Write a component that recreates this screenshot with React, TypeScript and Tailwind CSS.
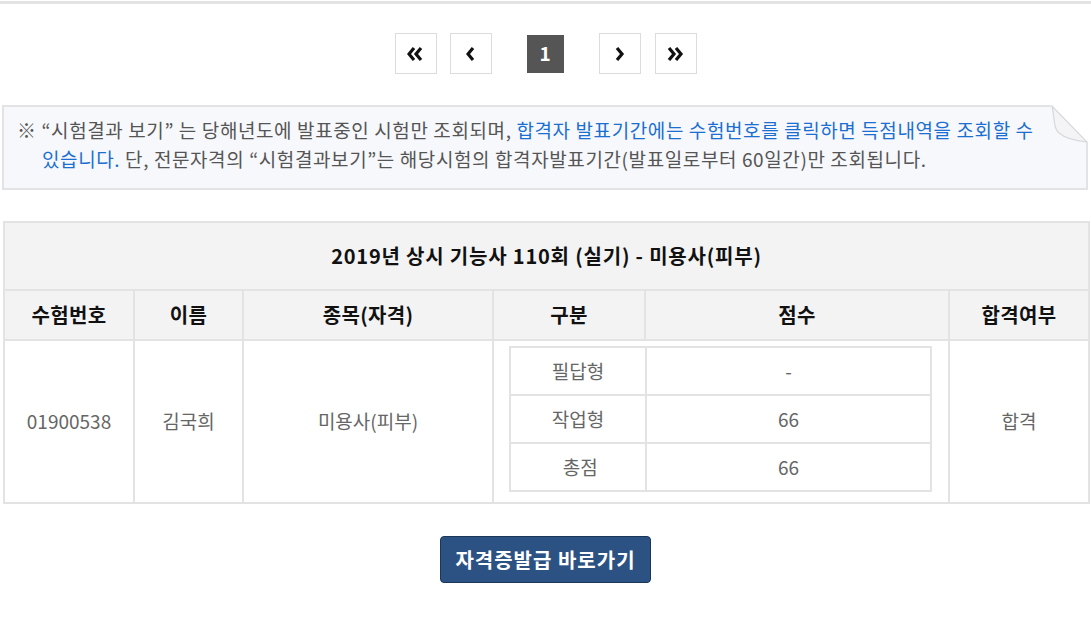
import React from "react";

const font = { fontFamily: '"Noto Sans CJK KR", "Noto Sans", sans-serif' };

function Chev({ dir, double }: { dir: "l" | "r"; double?: boolean }) {
  const pts = (x: number) =>
    dir === "l" ? `${x + 5},2 ${x},8 ${x + 5},14` : `${x},2 ${x + 5},8 ${x},14`;
  return (
    <svg width={double ? 18 : 10} height="16" viewBox={double ? "0 0 18 16" : "0 0 10 16"}>
      {double ? (
        <>
          <polyline points={pts(2)} fill="none" stroke="#111" strokeWidth="3.2" strokeLinejoin="miter" />
          <polyline points={pts(9)} fill="none" stroke="#111" strokeWidth="3.2" strokeLinejoin="miter" />
        </>
      ) : (
        <polyline points={pts(2)} fill="none" stroke="#111" strokeWidth="3.2" strokeLinejoin="miter" />
      )}
    </svg>
  );
}

function PBtn({ children }: { children: React.ReactNode }) {
  return (
    <div className="w-[42px] h-[41px] border border-[#dcdcdc] bg-white flex items-center justify-center">
      {children}
    </div>
  );
}

export default function App() {
  const th = "border-2 border-[#e3e3e3] bg-[#f3f3f3] text-[20px] font-bold text-[#111] text-center tracking-[0.3px]";
  const td = "border-2 border-[#e3e3e3] text-[19px] text-[#666] text-center";
  const itd = "border-2 border-[#e3e3e3] text-[19px] text-[#666] text-center h-[48px]";
  return (
    <div className="w-[1091px] h-[637px] bg-white" style={font}>
      <div className="h-[3px] bg-[#e3e3e3] mt-[1px]" />
      <div className="flex justify-center items-center mt-[29px] h-[41px]">
        <PBtn><Chev dir="l" double /></PBtn>
        <div className="w-[13px]" />
        <PBtn><Chev dir="l" /></PBtn>
        <div className="w-[35px]" />
        <div className="w-[37px] h-[38px] bg-[#555] text-white font-bold text-[19px] flex items-center justify-center">1</div>
        <div className="w-[35px]" />
        <PBtn><Chev dir="r" /></PBtn>
        <div className="w-[14px]" />
        <PBtn><Chev dir="r" double /></PBtn>
      </div>

      <div className="relative ml-[2px] mr-[3px] mt-[31px] h-[85px] border-2 border-[#e3e3e6] bg-[#f7f8fc] pt-[8px] pl-[38px] pr-[40px] text-[19px] leading-[29px] text-[#555] tracking-[0.6px]">
        <div className="-indent-[25px] whitespace-nowrap">
          ※ “시험결과 보기” 는 당해년도에 발표중인 시험만 조회되며,{" "}
          <span className="text-[#1a6fd1]">합격자 발표기간에는 수험번호를 클릭하면 득점내역을 조회할 수</span>
          <br />
          <span className="text-[#1a6fd1]">있습니다.</span> 단, 전문자격의 “시험결과보기”는 해당시험의 합격자발표기간(발표일로부터 60일간)만 조회됩니다.
        </div>
        <svg className="absolute -top-[2px] -right-[2px]" width="38" height="38" viewBox="0 0 38 38">
          <polygon points="0,0 38,0 38,38" fill="#ffffff" />
          <path d="M2 1 C 5 13, 3 23, 9 28 C 15 33, 27 36, 37 37 L 2 1 Z" fill="#f4f4f6" stroke="#d8d8dc" strokeWidth="1.2" />
        </svg>
      </div>

      <table className="ml-[3px] mt-[31px] w-[1085px] border-collapse table-fixed">
        <colgroup>
          <col style={{ width: 130 }} />
          <col style={{ width: 109 }} />
          <col style={{ width: 250 }} />
          <col style={{ width: 152 }} />
          <col style={{ width: 304 }} />
          <col style={{ width: 140 }} />
        </colgroup>
        <tbody>
          <tr className="h-[68px]">
            <td colSpan={6} className={th + " tracking-[0.8px]"}>2019년 상시 기능사 110회 (실기) - 미용사(피부)</td>
          </tr>
          <tr className="h-[50px]">
            <td className={th}>수험번호</td>
            <td className={th}>이름</td>
            <td className={th}>종목(자격)</td>
            <td className={th}>구분</td>
            <td className={th}>점수</td>
            <td className={th}>합격여부</td>
          </tr>
          <tr className="h-[163px]">
            <td className={td + " text-[18px]"}>01900538</td>
            <td className={td}>김국희</td>
            <td className={td}>미용사(피부)</td>
            <td colSpan={2} className="border-2 border-[#e3e3e3] pl-[15px] pr-[16px] pt-[5px] pb-[10px] align-top">
              <table className="w-full border-collapse table-fixed">
                <colgroup>
                  <col style={{ width: 136 }} />
                  <col />
                </colgroup>
                <tbody>
                  <tr><td className={itd}>필답형</td><td className={itd + " text-[18px]"}>-</td></tr>
                  <tr><td className={itd}>작업형</td><td className={itd + " text-[18px]"}>66</td></tr>
                  <tr><td className={itd}>&nbsp;총점</td><td className={itd + " text-[18px]"}>66</td></tr>
                </tbody>
              </table>
            </td>
            <td className={td}>합격</td>
          </tr>
        </tbody>
      </table>

      <div className="flex justify-center mt-[32px]">
        <div className="w-[211px] h-[47px] bg-[#2c5284] border border-[#1c365a] rounded-[4px] text-white font-bold text-[20px] tracking-[1px] flex items-center justify-center">
          자격증발급 바로가기
        </div>
      </div>
    </div>
  );
}
